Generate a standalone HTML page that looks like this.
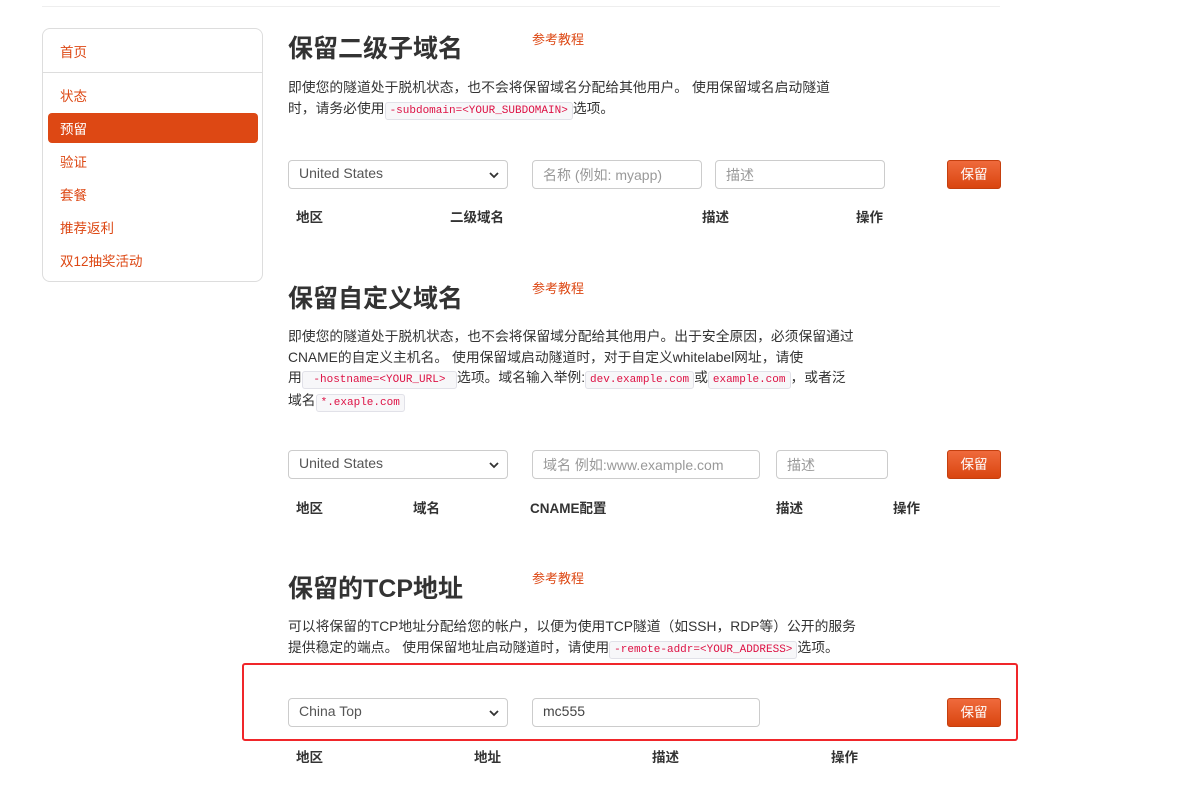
<!DOCTYPE html>
<html><head><meta charset="utf-8"><style>
*{box-sizing:border-box;margin:0;padding:0}
body{width:1180px;height:805px;background:#fff;font-family:"Liberation Sans","Noto Sans CJK SC",sans-serif;color:#333;position:relative;overflow:hidden;font-size:13.5px}
.topline{position:absolute;left:42px;top:6px;width:958px;height:1px;background:#eee}
.side{position:absolute;left:42px;top:28px;width:221px;height:254px;border:1px solid #ddd;border-radius:8px}
.side .sep{position:absolute;left:0;right:0;top:43px;height:1px;background:#ddd}
.nav{position:absolute;left:17px;color:#dd4814;font-size:13.5px}
.act{position:absolute;left:5px;top:84px;width:210px;height:30px;background:#dd4814;border-radius:4px;color:#fff;padding:5px 0 0 12px}
h2{position:absolute;left:288px;font-size:25px;font-weight:bold;color:#333;white-space:nowrap}
.ref{position:absolute;left:532px;color:#dd4814;font-size:13px}
.p{position:absolute;left:288px;line-height:20.7px;font-size:13.8px;color:#333;white-space:nowrap}
code{font-family:"Liberation Mono",monospace;font-size:11px;color:#dd1144;background:#f7f7f9;border:1px solid #e1e1e8;border-radius:3px;padding:2px 4px}
.sel,.inp{position:absolute;height:29px;border:1px solid #ccc;border-radius:4px;font-size:14px;padding:4px 10px;color:#555;background:#fff}
.sel svg{position:absolute;right:8px;top:11px}
.ph{color:#999}
.btn{position:absolute;left:947px;width:54px;height:29px;border-radius:3px;background:linear-gradient(#ef6a3c,#d9450f);border:1px solid #c53f0e;color:#fff;font-size:13.5px;text-align:center;line-height:27px}
.th{position:absolute;font-weight:bold;font-size:13.5px;color:#333}
.red{position:absolute;left:242px;top:663px;width:776px;height:78px;border:2px solid #f0262a;border-radius:3px}
</style></head><body>
<div class="topline"></div>
<div class="side">
<div class="nav" style="top:12px">首页</div>
<div class="sep"></div>
<div class="nav" style="top:56px">状态</div>
<div class="act">预留</div>
<div class="nav" style="top:122px">验证</div>
<div class="nav" style="top:155px">套餐</div>
<div class="nav" style="top:188px">推荐返利</div>
<div class="nav" style="top:221px">双12抽奖活动</div>
</div>

<h2 style="top:29px">保留二级子域名</h2>
<div class="ref" style="top:29px">参考教程</div>
<div class="p" style="top:78px">即使您的隧道处于脱机状态，也不会将保留域名分配给其他用户。 使用保留域名启动隧道<br>时，请务必使用<code>-subdomain=&lt;YOUR_SUBDOMAIN&gt;</code>选项。</div>
<div class="sel" style="left:288px;top:160px;width:220px">United States<svg width="10" height="7" viewBox="0 0 10 7"><path d="M1 1l4 4 4-4" stroke="#333" stroke-width="1.8" fill="none"/></svg></div>
<div class="inp" style="left:532px;top:160px;width:170px"><span class="ph">名称 (例如: myapp)</span></div>
<div class="inp" style="left:715px;top:160px;width:170px"><span class="ph">描述</span></div>
<div class="btn" style="top:160px">保留</div>
<div class="th" style="left:296px;top:206px">地区</div>
<div class="th" style="left:450px;top:206px">二级域名</div>
<div class="th" style="left:702px;top:206px">描述</div>
<div class="th" style="left:856px;top:206px">操作</div>

<h2 style="top:279px">保留自定义域名</h2>
<div class="ref" style="top:278px">参考教程</div>
<div class="p" style="top:327px">即使您的隧道处于脱机状态，也不会将保留域分配给其他用户。出于安全原因，必须保留通过<br>CNAME的自定义主机名。 使用保留域启动隧道时，对于自定义whitelabel网址，请使<br>用<code>&nbsp;-hostname=&lt;YOUR_URL&gt;&nbsp;</code>选项。域名输入举例:<code>dev.example.com</code>或<code>example.com</code>，或者泛<br>域名<code>*.exaple.com</code></div>
<div class="sel" style="left:288px;top:450px;width:220px">United States<svg width="10" height="7" viewBox="0 0 10 7"><path d="M1 1l4 4 4-4" stroke="#333" stroke-width="1.8" fill="none"/></svg></div>
<div class="inp" style="left:532px;top:450px;width:228px"><span class="ph">域名 例如:www.example.com</span></div>
<div class="inp" style="left:776px;top:450px;width:112px"><span class="ph">描述</span></div>
<div class="btn" style="top:450px">保留</div>
<div class="th" style="left:296px;top:497px">地区</div>
<div class="th" style="left:413px;top:497px">域名</div>
<div class="th" style="left:530px;top:497px">CNAME配置</div>
<div class="th" style="left:776px;top:497px">描述</div>
<div class="th" style="left:893px;top:497px">操作</div>

<h2 style="top:569px">保留的TCP地址</h2>
<div class="ref" style="top:568px">参考教程</div>
<div class="p" style="top:617px">可以将保留的TCP地址分配给您的帐户，以便为使用TCP隧道（如SSH，RDP等）公开的服务<br>提供稳定的端点。 使用保留地址启动隧道时，请使用<code>-remote-addr=&lt;YOUR_ADDRESS&gt;</code>选项。</div>
<div class="red"></div>
<div class="sel" style="left:288px;top:698px;width:220px">China Top<svg width="10" height="7" viewBox="0 0 10 7"><path d="M1 1l4 4 4-4" stroke="#333" stroke-width="1.8" fill="none"/></svg></div>
<div class="inp" style="left:532px;top:698px;width:228px;color:#444">mc555</div>
<div class="btn" style="top:698px">保留</div>
<div class="th" style="left:296px;top:746px">地区</div>
<div class="th" style="left:474px;top:746px">地址</div>
<div class="th" style="left:652px;top:746px">描述</div>
<div class="th" style="left:831px;top:746px">操作</div>
</body></html>
